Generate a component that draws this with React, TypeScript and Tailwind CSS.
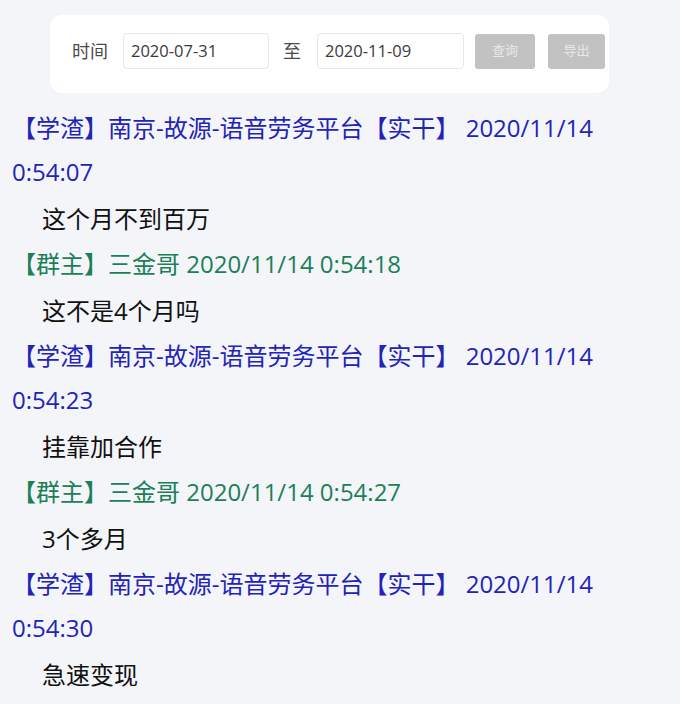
import React from "react";

type Entry = { kind: "blue" | "green"; header: string; msg: string };

const entries: Entry[] = [
  { kind: "blue", header: "【学渣】南京-故源-语音劳务平台【实干】 2020/11/14 0:54:07", msg: "这个月不到百万" },
  { kind: "green", header: "【群主】三金哥 2020/11/14 0:54:18", msg: "这不是4个月吗" },
  { kind: "blue", header: "【学渣】南京-故源-语音劳务平台【实干】 2020/11/14 0:54:23", msg: "挂靠加合作" },
  { kind: "green", header: "【群主】三金哥 2020/11/14 0:54:27", msg: "3个多月" },
  { kind: "blue", header: "【学渣】南京-故源-语音劳务平台【实干】 2020/11/14 0:54:30", msg: "急速变现" },
];

export default function App() {
  return (
    <div className="w-[680px] h-[704px] overflow-hidden bg-[#f3f5f9] font-['Open_Sans','Noto_Sans_CJK_SC',sans-serif]">
      <div className="pt-[15px] pl-[50px]">
        <div className="w-[559px] h-[78px] bg-white rounded-xl flex items-center pb-[6px] pl-[22px]">
          <span className="text-[18px] text-[#4a4a4a] leading-none">时间</span>
          <div className="ml-[15px] w-[146px] h-[36px] rounded-[4px] border border-[#e4e7ed] bg-white flex items-center pl-[7px] text-[16.5px] text-[#3a3a3a]">
            2020-07-31
          </div>
          <span className="ml-[14px] text-[18px] text-[#4a4a4a] leading-none">至</span>
          <div className="ml-[16px] w-[147px] h-[36px] rounded-[4px] border border-[#e4e7ed] bg-white flex items-center pl-[7px] text-[16.5px] text-[#3a3a3a]">
            2020-11-09
          </div>
          <button className="ml-[11px] w-[60px] h-[35px] rounded-[3px] bg-[#c2c2c2] text-[13px] text-[#e8e8e8]">
            查询
          </button>
          <button className="ml-[13px] w-[57px] h-[35px] rounded-[3px] bg-[#c2c2c2] text-[13px] text-[#e8e8e8]">
            导出
          </button>
        </div>
      </div>
      <div className="mt-[13px] pl-[12px] pr-[8px]">
        {entries.map((e, i) => (
          <div key={i}>
            <div
              className={
                e.kind === "blue"
                  ? "text-[24px] leading-[44px] text-[#2323b8]"
                  : "text-[24px] leading-[44px] text-[#1d7f58]"
              }
            >
              {e.header}
            </div>
            <div className="mt-[2px] pl-[30px] text-[24px] leading-[46px] text-[#111]">{e.msg}</div>
          </div>
        ))}
      </div>
    </div>
  );
}
